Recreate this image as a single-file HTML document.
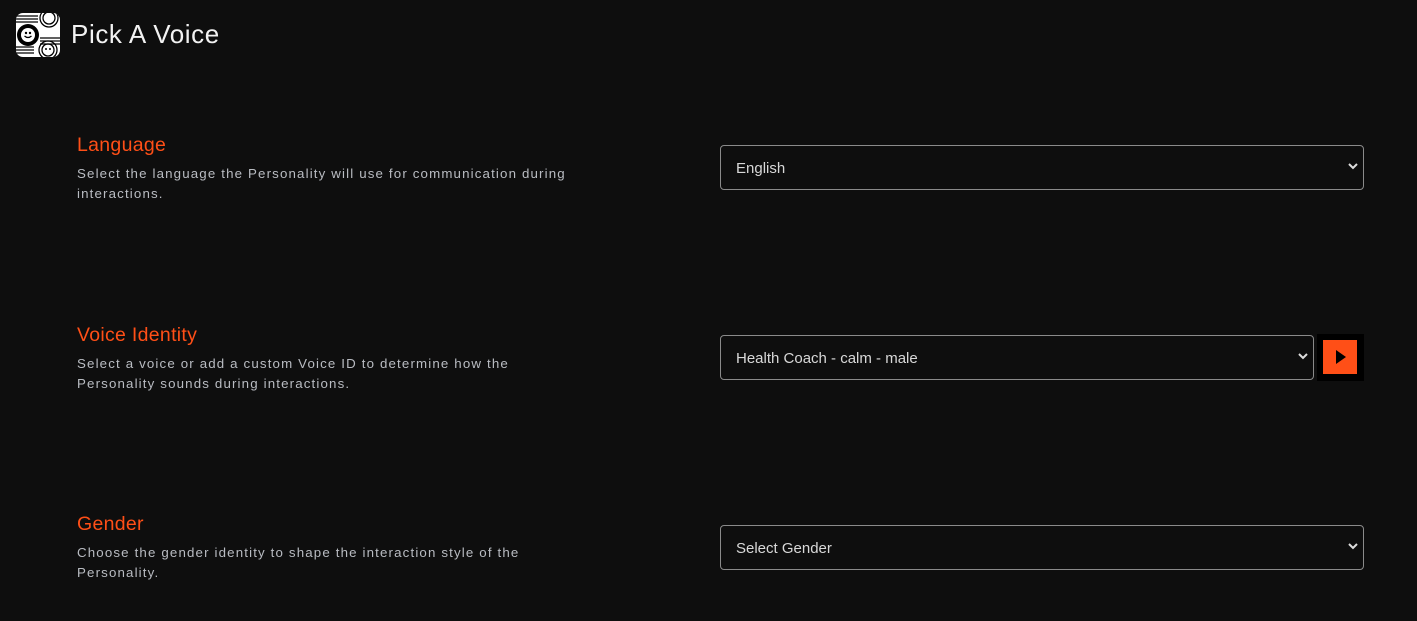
<!DOCTYPE html>
<html><head><meta charset="utf-8"><style>
*{box-sizing:border-box;margin:0;padding:0}
body{width:1417px;height:621px;background:#0e0e0e;font-family:"Liberation Sans",sans-serif;position:relative;overflow:hidden}
.logo{position:absolute;left:16px;top:13px;width:44px;height:44px;background:#fff;border-radius:7px;overflow:hidden}
.title{position:absolute;left:71px;top:19px;font-size:26px;color:#f2f2f2;letter-spacing:0.6px}
.lbl{position:absolute;left:77px;font-size:19.5px;color:#ff4f17;letter-spacing:0.3px}
.desc{position:absolute;left:77px;width:495px;font-size:13.3px;line-height:20px;color:#b9bcc2;letter-spacing:1.15px}
.sel{position:absolute;left:720px;height:45px;border:1px solid #8a8a8a;border-radius:4px;color:#d8d8d8;font-size:15px;padding:14px 15px}
.sel svg{position:absolute;right:5px;top:16px}
.play{position:absolute;left:1317px;top:334px;width:47px;height:47px;background:#000}
.play div{position:absolute;left:6px;top:6px;width:34px;height:34px;background:#ff4f17}
</style></head><body>
<div class="logo"><svg width="44" height="44" viewBox="0 0 44 44">
<g stroke="#000" stroke-width="1.2">
<line x1="0" y1="3" x2="22" y2="3"/><line x1="0" y1="6" x2="22" y2="6"/><line x1="0" y1="9" x2="22" y2="9"/>
<line x1="24" y1="25" x2="44" y2="25"/><line x1="24" y1="28" x2="44" y2="28"/><line x1="24" y1="31" x2="44" y2="31"/>
<line x1="0" y1="34" x2="18" y2="34"/><line x1="0" y1="37" x2="18" y2="37"/><line x1="0" y1="40" x2="18" y2="40"/>
</g>
<circle cx="12" cy="22" r="11" fill="#000"/><circle cx="12" cy="22" r="7" fill="#fff"/>
<circle cx="10" cy="20" r="1.2"/><circle cx="14" cy="20" r="1.2"/><path d="M8.5 23q3.5 3 7 0" stroke="#000" fill="none" stroke-width="1.3"/>
<circle cx="33" cy="5" r="9" fill="none" stroke="#000" stroke-width="1.3"/><circle cx="33" cy="5" r="6" fill="none" stroke="#000" stroke-width="1.3"/>
<circle cx="32" cy="37" r="9" fill="none" stroke="#000" stroke-width="1.3"/><circle cx="32" cy="37" r="6" fill="none" stroke="#000" stroke-width="1.3"/>
<circle cx="30" cy="36" r="1"/><circle cx="34" cy="36" r="1"/>
</svg></div>
<div class="title">Pick A Voice</div>

<div class="lbl" style="top:134px">Language</div>
<div class="desc" style="top:164px">Select the language the Personality will use for communication during interactions.</div>
<div class="sel" style="top:145px;width:644px">English<svg width="10" height="8" viewBox="0 0 10 8"><path d="M1 2l4 4 4-4" stroke="#ddd" stroke-width="2" fill="none"/></svg></div>

<div class="lbl" style="top:324px">Voice Identity</div>
<div class="desc" style="top:354px">Select a voice or add a custom Voice ID to determine how the Personality sounds during interactions.</div>
<div class="sel" style="top:335px;width:594px">Health Coach - calm - male<svg width="10" height="8" viewBox="0 0 10 8"><path d="M1 2l4 4 4-4" stroke="#ddd" stroke-width="2" fill="none"/></svg></div>
<div class="play"><div><svg width="34" height="34" viewBox="0 0 34 34"><path d="M13 10v14l10-7z" fill="#000"/></svg></div></div>

<div class="lbl" style="top:513px">Gender</div>
<div class="desc" style="top:543px">Choose the gender identity to shape the interaction style of the Personality.</div>
<div class="sel" style="top:525px;width:644px">Select Gender<svg width="10" height="8" viewBox="0 0 10 8"><path d="M1 2l4 4 4-4" stroke="#ddd" stroke-width="2" fill="none"/></svg></div>
</body></html>
